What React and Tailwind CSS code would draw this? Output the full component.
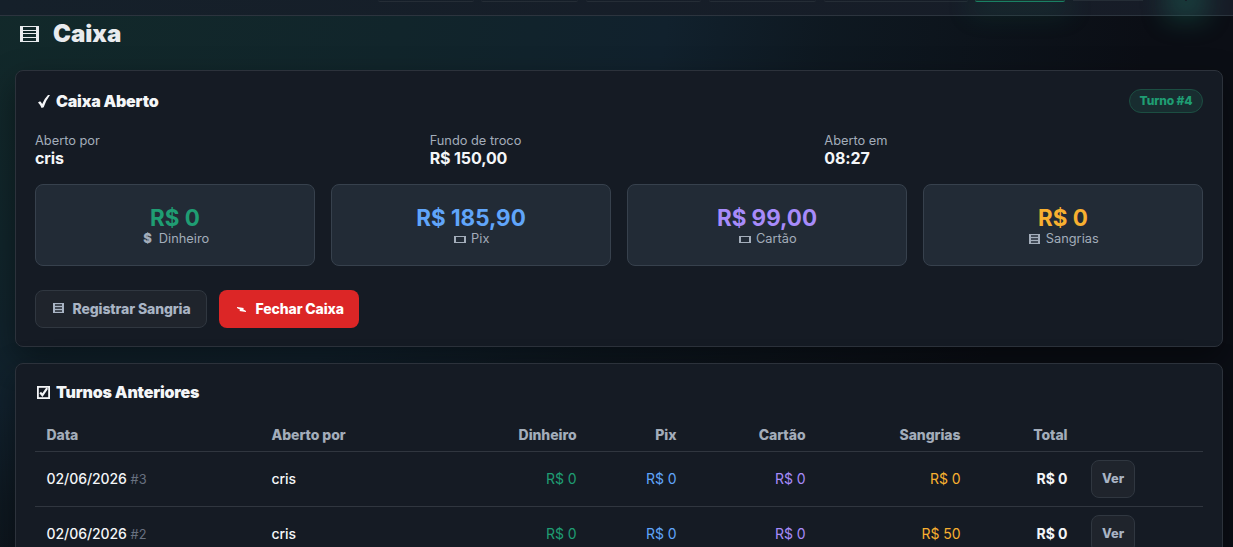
const GridIcon = ({ className }) => (
  <svg viewBox="0 0 19 16" className={className} fill="none" stroke="currentColor">
    <path d="M1.5 0V16M17.5 0V16" strokeWidth="3" />
    <path d="M2 .5H17M2 4.5H17M2 7.5H17M2 11.5H17M2 15.5H17" strokeWidth="1.1" />
  </svg>
);

const LinesIcon = ({ className }) => (
  <svg viewBox="0 0 11 10" className={className} fill="none" stroke="currentColor">
    <path d="M1 0V10M10 0V10" strokeWidth="2" />
    <path d="M1 .5H10M1 3.5H10M1 6.5H10M1 9.5H10" strokeWidth="1.4" />
  </svg>
);

const CardIcon = ({ className }) => (
  <svg viewBox="0 0 12 7" className={className} fill="none" stroke="currentColor">
    <path d="M1 0V7M11 0V7" strokeWidth="2" />
    <path d="M1 .5H11M1 6.5H11" strokeWidth="1" />
  </svg>
);

const CheckIcon = ({ className }) => (
  <svg viewBox="0 0 12 13" className={className} fill="currentColor">
    <path d="M0 7.4 2.1 6.2Q3.4 7.3 4.2 8.9Q6.5 3.4 10 0H12Q8 5.2 5.7 12.3L3.6 13Q2.2 9.4 0 7.4Z" />
  </svg>
);

const CheckBoxIcon = ({ className }) => (
  <svg viewBox="0 0 13 13" className={className} fill="none" stroke="currentColor">
    <rect x="0.9" y="0.9" width="11.2" height="11.2" strokeWidth="1.8" />
    <path d="M3.2 6.5 5.4 9.2 10.2 2.2" strokeWidth="2.2" />
  </svg>
);

const BoltIcon = ({ className }) => (
  <svg viewBox="0 0 10 5" className={className} fill="currentColor">
    <path d="M0 0 6.8 1 6.2 2.2 9 4V5L2.4 3.9 3.2 2.7 0 1Z" />
  </svg>
);

const info = [
  { label: "Aberto por", valor: "cris" },
  { label: "Fundo de troco", valor: "R$ 150,00" },
  { label: "Aberto em", valor: "08:27" },
];

const resumo = [
  { label: "Dinheiro", valor: "R$ 0", cor: "text-[#1f9d73]", icon: <b className="mr-[7px] ml-px font-black">$</b> },
  { label: "Pix", valor: "R$ 185,90", cor: "text-[#60a5fa]", icon: <CardIcon className="mr-[5px] mt-px h-[7px] w-3" /> },
  { label: "Cartão", valor: "R$ 99,00", cor: "text-[#a78bfa]", icon: <CardIcon className="mr-[5px] mt-px h-[7px] w-3" /> },
  { label: "Sangrias", valor: "R$ 0", cor: "text-[#f8b030]", icon: <LinesIcon className="mr-[6px] -mt-px h-[10px] w-[11px]" /> },
];

const turnos = [
  { id: 3, data: "02/06/2026", operador: "cris", sangrias: "R$ 0" },
  { id: 2, data: "02/06/2026", operador: "cris", sangrias: "R$ 50" },
];

// Barra de navegação: só a parte de baixo das abas fica visível
const abas = [
  "ml-[378px] w-[96px]",
  "ml-[7px] w-[97px]",
  "ml-[8px] w-[115px]",
  "ml-[8px] w-[107px]",
  "ml-[8px] w-[144px]",
];

const card = "rounded-lg border border-[#2c323b] bg-[#151b24] shadow-[0_12px_32px_rgba(0,0,0,0.4)]";

export default function Caixa() {
  return (
    <div className="relative h-[547px] w-[1233px] overflow-hidden bg-[#0b0e15] bg-[radial-gradient(ellipse_1150px_700px_at_0%_0%,#12292a_0%,#11252b_35%,#11212d_58%,rgba(15,27,36,0.8)_72%,transparent_100%)] font-['Inter',sans-serif] text-[#f4f6f8]">
      <header className="relative flex h-4 items-start border-b border-[#2c343e] bg-[linear-gradient(90deg,#15202a,#171c27)]">
        {abas.map((aba) => (
          <div key={aba} className={`h-[2px] shrink-0 rounded-b-lg border-b border-[#252d36] ${aba}`} />
        ))}
        <div className="ml-[7px] h-[2px] w-[90px] shrink-0 rounded-b-[2px] border-b border-[#1a8064] bg-[#19332f] shadow-[0_6px_26px_6px_rgba(31,157,115,0.17)]" />
        <div className="ml-[8px] h-px w-[70px] shrink-0 bg-[#252d36]" />
        <div className="ml-[42px] h-px w-[2px] shrink-0 rounded-full shadow-[0_0_24px_20px_rgba(31,157,125,0.25)]" />
      </header>

      <main className="relative px-[15px]">
        <h1 className="flex h-[54px] items-start pl-[5px] pt-0.5 text-2xl leading-8 font-black text-[#e9ebee]">
          <GridIcon className="mt-2 mr-[14px] h-4 w-[19px]" />
          Caixa
        </h1>

        <section className={`h-[277px] w-[1208px] px-[19px] pt-[18px] ${card}`}>
          <div className="flex h-6 items-center justify-between">
            <h2 className="flex items-center pl-[3px] text-base font-black tracking-[-0.2px]">
              <CheckIcon className="mr-[6px] h-[13px] w-3" />
              Caixa Aberto
            </h2>
            <span className="flex h-6 w-[74px] items-center justify-center rounded-full border border-[#1c4e42] bg-[#182d30] text-xs font-extrabold tracking-[-0.1px] text-[#1f9d73]">
              Turno #4
            </span>
          </div>

          <div className="mt-[18px] grid grid-cols-3 gap-4">
            {info.map((item) => (
              <div key={item.label}>
                <div className="h-[18px] pt-px text-[12.8px] leading-[18px] text-[#a3adba]">{item.label}</div>
                <div className="text-base leading-[18px] font-bold tracking-[-0.12px]">{item.valor}</div>
              </div>
            ))}
          </div>

          <div className="mt-[17px] grid grid-cols-4 gap-4">
            {resumo.map((item) => (
              <div key={item.label} className="flex h-[82px] flex-col items-center rounded-lg border border-[#37414d] bg-[#222b36] pt-5">
                <div className={`text-[22.4px] leading-[26px] font-bold ${item.cor}`}>{item.valor}</div>
                <div className="flex items-center pl-[1.5px] text-[12.8px] leading-4 text-[#a3adba]">
                  {item.icon}
                  {item.label}
                </div>
              </div>
            ))}
          </div>

          <div className="mt-6 flex gap-3">
            <button className="flex h-[38px] w-[172px] items-center rounded-lg border border-[#303740] bg-[#1f242c] pl-[17px] text-sm font-extrabold tracking-[-0.12px] text-[#a9b4c4]">
              <LinesIcon className="mr-[8.5px] -mt-0.5 h-[10px] w-[11px]" />
              Registrar Sangria
            </button>
            <button className="flex h-[38px] w-[140px] items-center rounded-lg bg-[#dc2626] pl-[18px] text-sm font-extrabold tracking-[-0.12px] text-white">
              <BoltIcon className="mr-[8.5px] h-[5px] w-[10px]" />
              Fechar Caixa
            </button>
          </div>
        </section>

        <section className={`mt-4 h-[277px] w-[1208px] px-[19px] pt-4 ${card}`}>
          <h2 className="flex h-6 items-center pl-[2px] text-base font-black tracking-[-0.18px]">
            <CheckBoxIcon className="mr-[6px] h-[13px] w-[13px]" />
            Turnos Anteriores
          </h2>
          <table className="mt-[15px] w-full table-fixed border-collapse text-sm tracking-[-0.06px]">
            <colgroup>
              <col className="w-[225px]" />
              <col className="w-[174px]" />
              <col className="w-[154px]" />
              <col className="w-[100px]" />
              <col className="w-[129px]" />
              <col className="w-[155px]" />
              <col className="w-[107px]" />
              <col />
            </colgroup>
            <thead>
              <tr className="h-8 border-b border-[#30363f] text-right text-[#a3adba]">
                <th className="px-[11.5px] text-left font-extrabold">Data</th>
                <th className="px-[11.5px] text-left font-extrabold">Aberto por</th>
                <th className="px-[11.5px] font-extrabold">Dinheiro</th>
                <th className="px-[11.5px] font-extrabold">Pix</th>
                <th className="px-[11.5px] font-extrabold">Cartão</th>
                <th className="px-[11.5px] font-extrabold">Sangrias</th>
                <th className="px-[11.5px] font-extrabold">Total</th>
                <th></th>
              </tr>
            </thead>
            <tbody>
              {turnos.map((turno) => (
                <tr key={turno.id} className="h-[55px] border-b border-[#30363f] text-right">
                  <td className="px-[11.5px] pt-px text-left font-medium">
                    {turno.data} <span className="text-[12.8px] leading-none font-normal text-[#687180]">#{turno.id}</span>
                  </td>
                  <td className="px-[11.5px] text-left font-medium">{turno.operador}</td>
                  <td className="px-[11.5px] text-[#1f9d73]">R$ 0</td>
                  <td className="px-[11.5px] text-[#60a5fa]">R$ 0</td>
                  <td className="px-[11.5px] text-[#a78bfa]">R$ 0</td>
                  <td className="px-[11.5px] text-[#f8b030]">{turno.sangrias}</td>
                  <td className="px-[11.5px] font-bold">R$ 0</td>
                  <td className="pl-3 text-left">
                    <button className="flex h-[38px] w-11 items-center justify-center rounded-lg border border-[#303740] bg-[#1f242c] pt-px text-[12.8px] font-extrabold text-[#a9b4c4]">
                      Ver
                    </button>
                  </td>
                </tr>
              ))}
            </tbody>
          </table>
        </section>
      </main>
    </div>
  );
}
